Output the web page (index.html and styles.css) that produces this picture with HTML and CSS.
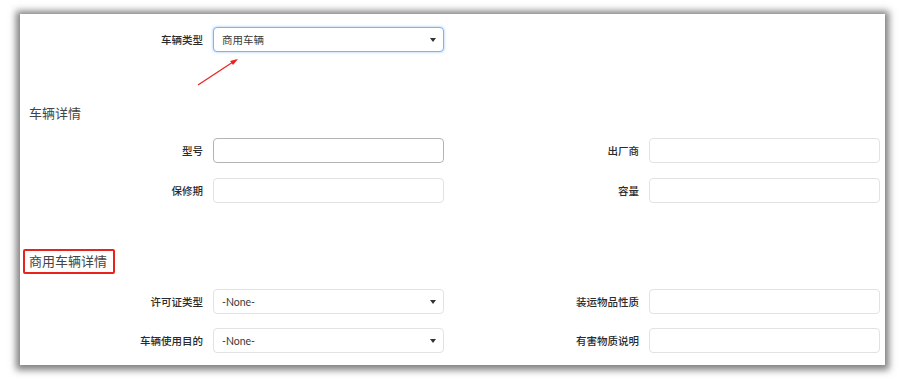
FILE: index.html
```html
<!DOCTYPE html>
<html lang="zh-CN">

<head>
    <meta charset="UTF-8">
    <meta name="viewport" content="width=device-width, initial-scale=1.0">
    <title>车辆详情</title>
    <link rel="stylesheet" href="styles.css">
</head>

<body>
    <div class="record-frame">
        <div class="form-grid top-row">
            <label class="field-label">车辆类型</label>
            <div class="select-box focused">
                <span>商用车辆</span>
                <span class="caret"></span>
            </div>
        </div>

        <!-- annotation arrow pointing at the type picklist -->
        <svg class="note-arrow" width="48" height="34" viewBox="0 0 48 34">
            <line x1="3" y1="29" x2="41" y2="4" stroke="#e8231b" stroke-width="1.2" />
            <polygon points="43,3 35,5 38,9" fill="#e8231b" />
        </svg>

        <h2 class="section-title">车辆详情</h2>
        <div class="form-grid">
            <label class="field-label">型号</label>
            <div class="text-box hovered"></div>
            <label class="field-label">出厂商</label>
            <div class="text-box"></div>

            <label class="field-label">保修期</label>
            <div class="text-box"></div>
            <label class="field-label">容量</label>
            <div class="text-box"></div>
        </div>

        <h2 class="section-title marked">商用车辆详情</h2>
        <div class="form-grid tight">
            <label class="field-label">许可证类型</label>
            <div class="select-box">
                <span>-None-</span>
                <span class="caret"></span>
            </div>
            <label class="field-label">装运物品性质</label>
            <div class="text-box"></div>

            <label class="field-label">车辆使用目的</label>
            <div class="select-box">
                <span>-None-</span>
                <span class="caret"></span>
            </div>
            <label class="field-label">有害物质说明</label>
            <div class="text-box"></div>
        </div>
    </div>
</body>

</html>
```

FILE: styles.css
```css
* {
    box-sizing: border-box;
    margin: 0;
    padding: 0;
    font-family: Lato, 'Noto Sans CJK SC', sans-serif;
}

body {
    background-color: #fff;
    padding: 14px 20px;
}

.record-frame {
    position: relative;
    background: #fff;
    height: 351px;
    padding: 13px 5px 12px 0;
    box-shadow: 0 1px 7px 4px rgba(0, 0, 0, 0.5);
}

.form-grid {
    display: grid;
    grid-template-columns: 193px 231px 205px 231px;
    grid-auto-rows: 25px;
    row-gap: 15px;
    align-items: center;
}

.form-grid.tight {
    row-gap: 14px;
}

.field-label {
    text-align: right;
    padding-right: 10px;
    font-size: 10.5px;
    font-weight: 500;
    color: #2b2b2b;
}

.text-box,
.select-box {
    height: 25px;
    border: 1px solid #e2e2e2;
    border-radius: 4px;
    background: #fff;
}

.text-box.hovered {
    border-color: #b4b4b4;
}

.select-box {
    display: flex;
    align-items: center;
    justify-content: space-between;
    padding: 0 7px 0 8px;
    font-size: 10.5px;
    color: #3a3a3a;
}

.select-box.focused {
    border-color: #7db4f0;
    box-shadow: 0 0 3px rgba(90, 160, 240, 0.6);
}

.caret {
    width: 0;
    height: 0;
    border-left: 3.5px solid transparent;
    border-right: 3.5px solid transparent;
    border-top: 4px solid #333;
}

.note-arrow {
    position: absolute;
    left: 175px;
    top: 42px;
}

.section-title {
    font-size: 13px;
    font-weight: normal;
    color: #444;
    line-height: 20px;
    margin: 51px 0 15px 9px;
}

.section-title.marked {
    display: inline-block;
    line-height: 21px;
    margin: 46px 0 15px 3px;
    padding: 0 6px 0 4px;
    border: 2px solid #e8231b;
    border-radius: 2px;
}
```
